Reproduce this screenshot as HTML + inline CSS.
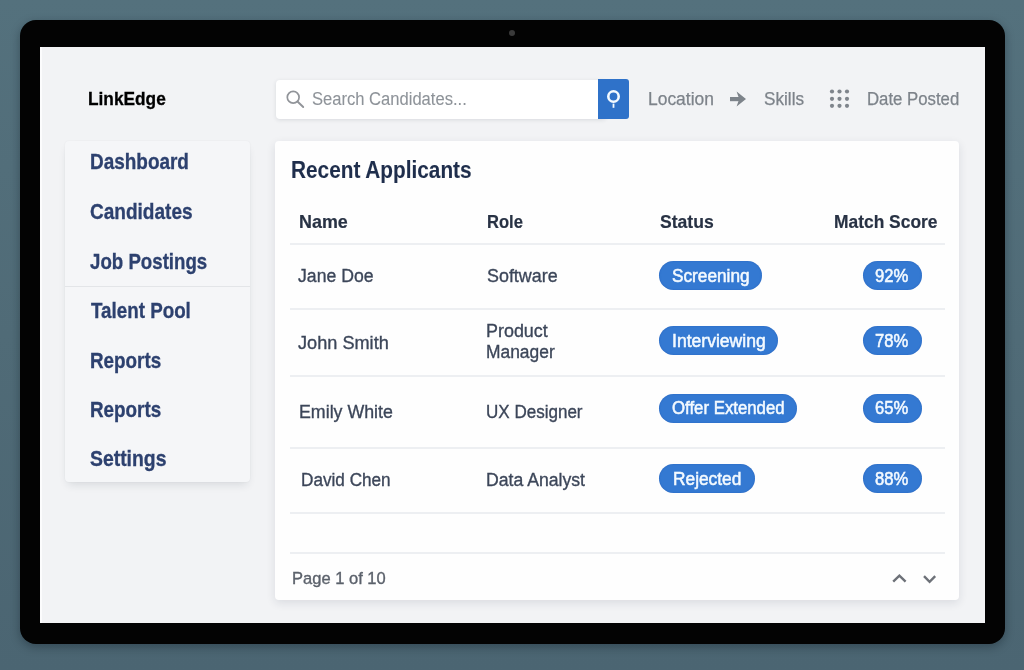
<!DOCTYPE html>
<html><head><meta charset="utf-8">
<style>
html,body{margin:0;padding:0;width:1024px;height:670px;overflow:hidden;background:#56717f;font-family:"Liberation Sans",sans-serif;}
.bg{position:absolute;left:0;top:0;width:1024px;height:670px;background:linear-gradient(180deg,#54717d 0%,#506b77 50%,#4b6572 100%);}
.bezel{position:absolute;left:20px;top:20px;width:985px;height:624px;background:#030303;border-radius:16px;box-shadow:0 3px 10px rgba(10,20,30,.35);}
.cam{position:absolute;left:509px;top:30px;width:6px;height:6px;border-radius:50%;background:#3a3a3a;filter:blur(.6px);}
.screen{position:absolute;left:40px;top:47px;width:945px;height:576px;background:#f2f3f5;overflow:hidden;box-shadow:inset 2px 0 0 #fcfcfd;}
.t{position:absolute;white-space:nowrap;line-height:1;transform-origin:0 0;}
.side{position:absolute;left:65px;top:141px;width:185px;height:341px;background:#f5f6f8;border-radius:4px;box-shadow:0 5px 10px -3px rgba(30,40,60,.14),0 0 2px rgba(30,40,60,.05);}
.sdiv{position:absolute;left:65px;top:285.5px;width:185px;height:1px;background:#e3e5e8;}
.nav{font-weight:700;color:#2a3e6c;}
.search{position:absolute;left:276px;top:80px;width:330px;height:39px;background:#fff;border-radius:4px;box-shadow:0 1px 4px rgba(30,40,60,.12);}
.sbtn{position:absolute;left:598px;top:79px;width:31px;height:40px;background:#2f72c9;border-radius:0 3px 3px 0;}
.filt{color:#7f858c;}
.card{position:absolute;left:275px;top:141px;width:684px;height:459px;background:#fefefe;border-radius:4px;box-shadow:0 3px 10px rgba(30,40,60,.11);}
.hl{position:absolute;left:290px;width:655px;height:2px;background:#edeff2;}
.hd{font-weight:700;color:#273043;}
.rw{color:#3b4456;}
.pill{position:absolute;height:29px;border-radius:15px;background:#3479d2;box-shadow:inset 0 0 1.5px rgba(20,70,160,.55);}
.pt{font-weight:700;color:#fff;}
</style></head><body>
<div class="bg"></div>
<div class="bezel"></div>
<div class="cam"></div>
<div class="screen"></div>

<!-- logo -->

<!-- search -->
<div class="search"></div>
<svg style="position:absolute;left:284px;top:88px" width="24" height="24" viewBox="0 0 24 24"><circle cx="9.2" cy="9.2" r="5.9" fill="none" stroke="#919499" stroke-width="1.7"/><line x1="13.5" y1="13.5" x2="19.2" y2="19" stroke="#919499" stroke-width="1.9" stroke-linecap="round"/></svg>
<div class="sbtn"></div>
<svg style="position:absolute;left:603px;top:86px" width="22" height="24" viewBox="0 0 22 24"><circle cx="10.5" cy="10.5" r="5.2" fill="none" stroke="#f4faff" stroke-width="2.6"/><line x1="10.5" y1="17.6" x2="10.5" y2="21.8" stroke="#f4faff" stroke-width="1.8"/></svg>

<svg style="position:absolute;left:728px;top:90px" width="20" height="18" viewBox="0 0 20 18"><rect x="2" y="7" width="10.5" height="4.2" fill="#7d838a"/><polygon points="8.6,1.4 18,9 8.6,16.6 11.2,9" fill="#7d838a"/></svg>
<svg style="position:absolute;left:828px;top:88px" width="24" height="22" viewBox="0 0 24 22">
<g fill="#7f858c"><circle cx="4" cy="3.5" r="2.1"/><circle cx="11.5" cy="3.5" r="2.1"/><circle cx="19" cy="3.5" r="2.1"/><circle cx="4" cy="10.8" r="2.1"/><circle cx="11.5" cy="10.8" r="2.1"/><circle cx="19" cy="10.8" r="2.1"/><circle cx="4" cy="17.8" r="2.1"/><circle cx="11.5" cy="17.8" r="2.1"/><circle cx="19" cy="17.8" r="2.1"/></g></svg>

<!-- sidebar -->
<div class="side"></div>
<div class="sdiv"></div>

<!-- card -->
<div class="card"></div>
<div class="hl" style="top:243px"></div>
<div class="hl" style="top:308px"></div>
<div class="hl" style="top:375px"></div>
<div class="hl" style="top:447px"></div>
<div class="hl" style="top:512px"></div>
<div class="hl" style="top:552px"></div>


<div class="pill" style="left:659px;top:261px;width:103px;"></div>
<div class="pill" style="left:863px;top:261px;width:59px;"></div>
<div class="pill" style="left:659px;top:326px;width:119px;"></div>
<div class="pill" style="left:863px;top:326px;width:59px;"></div>
<div class="pill" style="left:659px;top:394px;width:138px;"></div>
<div class="pill" style="left:863px;top:394px;width:59px;"></div>
<div class="pill" style="left:659px;top:464px;width:96px;"></div>
<div class="pill" style="left:863px;top:464px;width:59px;"></div>


<svg style="position:absolute;left:888px;top:568px" width="54" height="20" viewBox="0 0 54 20"><polyline points="5.2,13.6 11.4,7.6 17.6,13.6" fill="none" stroke="#6d7178" stroke-width="2.4"/><polyline points="36,8.2 41.6,13.8 47.2,8.2" fill="none" stroke="#6d7178" stroke-width="2.4"/></svg>
<div class="t" style="left:88.06px;top:89.86px;font-size:18.50px;font-weight:700;color:#000000;-webkit-text-stroke:0.3px #000000;transform:scaleX(0.9340);">LinkEdge</div>
<div class="t" style="left:311.96px;top:90.89px;font-size:17.50px;font-weight:400;color:#8e9399;-webkit-text-stroke:0.1px #8e9399;transform:scaleX(0.9469);">Search Candidates...</div>
<div class="t" style="left:648.46px;top:90.89px;font-size:17.50px;font-weight:400;color:#7d838a;-webkit-text-stroke:0.25px #7d838a;transform:scaleX(0.9962);">Location</div>
<div class="t" style="left:763.95px;top:90.89px;font-size:17.50px;font-weight:400;color:#7d838a;-webkit-text-stroke:0.25px #7d838a;transform:scaleX(0.9802);">Skills</div>
<div class="t" style="left:867.38px;top:91.07px;font-size:17.50px;font-weight:400;color:#7d838a;-webkit-text-stroke:0.25px #7d838a;transform:scaleX(0.9576);">Date Posted</div>
<div class="t" style="left:90.17px;top:151.40px;font-size:21.20px;font-weight:700;color:#2d416f;-webkit-text-stroke:0.3px #2d416f;transform:scaleX(0.8941);">Dashboard</div>
<div class="t" style="left:90.32px;top:200.92px;font-size:21.20px;font-weight:700;color:#2d416f;-webkit-text-stroke:0.3px #2d416f;transform:scaleX(0.8983);">Candidates</div>
<div class="t" style="left:90.05px;top:250.88px;font-size:21.20px;font-weight:700;color:#2d416f;-webkit-text-stroke:0.3px #2d416f;transform:scaleX(0.8813);">Job Postings</div>
<div class="t" style="left:90.58px;top:300.07px;font-size:21.20px;font-weight:700;color:#2d416f;-webkit-text-stroke:0.3px #2d416f;transform:scaleX(0.8866);">Talent Pool</div>
<div class="t" style="left:90.03px;top:349.52px;font-size:21.20px;font-weight:700;color:#2d416f;-webkit-text-stroke:0.3px #2d416f;transform:scaleX(0.8892);">Reports</div>
<div class="t" style="left:90.03px;top:399.00px;font-size:21.20px;font-weight:700;color:#2d416f;-webkit-text-stroke:0.3px #2d416f;transform:scaleX(0.8892);">Reports</div>
<div class="t" style="left:90.09px;top:448.38px;font-size:21.20px;font-weight:700;color:#2d416f;-webkit-text-stroke:0.3px #2d416f;transform:scaleX(0.9146);">Settings</div>
<div class="t" style="left:290.70px;top:159.31px;font-size:23.00px;font-weight:700;color:#1f2e4c;-webkit-text-stroke:0.1px #1f2e4c;transform:scaleX(0.9037);">Recent Applicants</div>
<div class="t" style="left:298.89px;top:213.04px;font-size:18.60px;font-weight:700;color:#283244;-webkit-text-stroke:0.2px #283244;transform:scaleX(0.9624);">Name</div>
<div class="t" style="left:486.89px;top:212.90px;font-size:18.60px;font-weight:700;color:#283244;-webkit-text-stroke:0.2px #283244;transform:scaleX(0.8909);">Role</div>
<div class="t" style="left:660.36px;top:212.76px;font-size:18.60px;font-weight:700;color:#283244;-webkit-text-stroke:0.2px #283244;transform:scaleX(0.9448);">Status</div>
<div class="t" style="left:833.97px;top:212.71px;font-size:18.60px;font-weight:700;color:#283244;-webkit-text-stroke:0.2px #283244;transform:scaleX(0.9358);">Match Score</div>
<div class="t" style="left:297.96px;top:265.54px;font-size:19.20px;font-weight:400;color:#3c4659;-webkit-text-stroke:0.35px #3c4659;transform:scaleX(0.9194);">Jane Doe</div>
<div class="t" style="left:487.06px;top:265.92px;font-size:19.20px;font-weight:400;color:#3c4659;-webkit-text-stroke:0.35px #3c4659;transform:scaleX(0.9325);">Software</div>
<div class="t" style="left:298.20px;top:332.95px;font-size:19.20px;font-weight:400;color:#3c4659;-webkit-text-stroke:0.35px #3c4659;transform:scaleX(0.9457);">John Smith</div>
<div class="t" style="left:486.21px;top:321.19px;font-size:19.20px;font-weight:400;color:#3c4659;-webkit-text-stroke:0.35px #3c4659;transform:scaleX(0.9342);">Product</div>
<div class="t" style="left:486.10px;top:341.63px;font-size:19.20px;font-weight:400;color:#3c4659;-webkit-text-stroke:0.35px #3c4659;transform:scaleX(0.9073);">Manager</div>
<div class="t" style="left:299.06px;top:401.57px;font-size:19.20px;font-weight:400;color:#3c4659;-webkit-text-stroke:0.35px #3c4659;transform:scaleX(0.9272);">Emily White</div>
<div class="t" style="left:486.07px;top:401.87px;font-size:19.20px;font-weight:400;color:#3c4659;-webkit-text-stroke:0.35px #3c4659;transform:scaleX(0.8874);">UX Designer</div>
<div class="t" style="left:300.82px;top:469.57px;font-size:19.20px;font-weight:400;color:#3c4659;-webkit-text-stroke:0.35px #3c4659;transform:scaleX(0.8941);">David Chen</div>
<div class="t" style="left:486.39px;top:469.57px;font-size:19.20px;font-weight:400;color:#3c4659;-webkit-text-stroke:0.35px #3c4659;transform:scaleX(0.9188);">Data Analyst</div>
<div class="t" style="left:671.99px;top:267.25px;font-size:18.90px;font-weight:400;color:#f4faff;-webkit-text-stroke:0.55px #f4faff;transform:scaleX(0.9120);">Screening</div>
<div class="t" style="left:875.06px;top:266.73px;font-size:18.90px;font-weight:400;color:#f4faff;-webkit-text-stroke:0.55px #f4faff;transform:scaleX(0.8822);">92%</div>
<div class="t" style="left:672.39px;top:331.71px;font-size:18.90px;font-weight:400;color:#f4faff;-webkit-text-stroke:0.55px #f4faff;transform:scaleX(0.9299);">Interviewing</div>
<div class="t" style="left:875.41px;top:331.89px;font-size:18.90px;font-weight:400;color:#f4faff;-webkit-text-stroke:0.55px #f4faff;transform:scaleX(0.8793);">78%</div>
<div class="t" style="left:672.46px;top:399.21px;font-size:18.90px;font-weight:400;color:#f4faff;-webkit-text-stroke:0.55px #f4faff;transform:scaleX(0.8889);">Offer Extended</div>
<div class="t" style="left:875.24px;top:399.48px;font-size:18.90px;font-weight:400;color:#f4faff;-webkit-text-stroke:0.55px #f4faff;transform:scaleX(0.8779);">65%</div>
<div class="t" style="left:673.20px;top:470.32px;font-size:18.90px;font-weight:400;color:#f4faff;-webkit-text-stroke:0.55px #f4faff;transform:scaleX(0.9164);">Rejected</div>
<div class="t" style="left:875.15px;top:470.32px;font-size:18.90px;font-weight:400;color:#f4faff;-webkit-text-stroke:0.55px #f4faff;transform:scaleX(0.8801);">88%</div>
<div class="t" style="left:291.61px;top:571.04px;font-size:16.80px;font-weight:400;color:#5b616b;-webkit-text-stroke:0.35px #5b616b;transform:scaleX(0.9848);">Page 1 of 10</div>
</body></html>
